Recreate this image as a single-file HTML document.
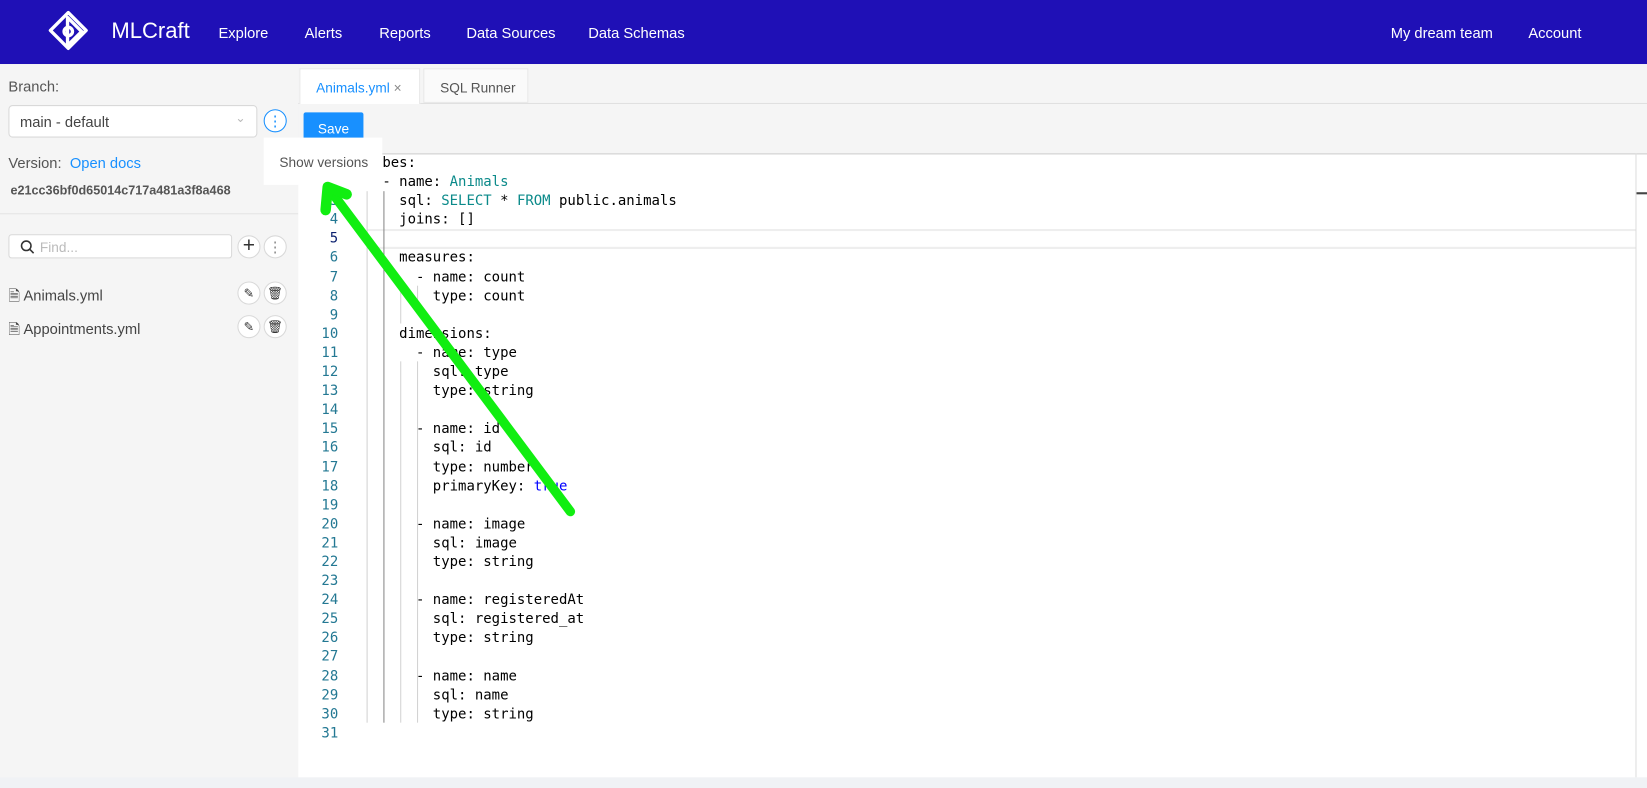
<!DOCTYPE html>
<html><head><meta charset="utf-8"><style>
*{box-sizing:border-box;margin:0;padding:0}
body{width:1647px;height:788px;overflow:hidden;background:#f0f2f5;font-family:"Liberation Sans",sans-serif;position:relative}
#w{position:absolute;left:0;top:0;width:1568px;height:750px;transform:scale(1.0504);transform-origin:0 0;background:#f0f2f5}
.nav{position:absolute;left:0;top:0;width:1568px;height:61px;background:#1f10b6;color:#fff;font-size:14px}
.nav span{position:absolute;top:23px}
.side{position:absolute;left:0;top:61px;width:284px;height:679px;background:#f5f5f5;color:#555;font-size:14px}
.a{position:absolute}
.main{position:absolute;left:284px;top:61px;width:1284px;height:679px;background:#f5f5f5}
.ed{position:absolute;left:284px;top:146px;width:1284px;height:594px;background:#fff;border-top:1px solid #ccc}
.ln{position:absolute;left:284px;width:38px;text-align:right;color:#237893;font:13.3px "DejaVu Sans Mono",monospace;line-height:18.1px}
.code{position:absolute;left:348px;top:147px;font:13.3px "DejaVu Sans Mono",monospace;line-height:18.1px;color:#000;white-space:pre}
.t{color:#0b8a8a}.b{color:#0000ff}
.g{position:absolute;width:1px;background:#d3d3d3}
.circ{position:absolute;width:22px;height:22px;border:1px solid #d9d9d9;border-radius:50%;background:#fff;text-align:center;font-size:14px;line-height:20px;color:#333}
</style></head><body><div id="w">
<div class="nav">
<svg class="a" style="left:44px;top:9px" width="42" height="44" viewBox="0 0 42 44" fill="none" stroke="#fff" stroke-width="3.2" stroke-linejoin="round"><path d="M21 3 L38 20 L21 37 L4 20 Z"/><path d="M11 12 L30 12 L30 31 Z" transform="rotate(45 21 21)"/><circle cx="21" cy="21" r="4"/></svg>
<span style="left:106px;top:18px;font-size:21px">MLCraft</span>
<span style="left:208px">Explore</span><span style="left:290px">Alerts</span><span style="left:361px">Reports</span><span style="left:444px">Data Sources</span><span style="left:560px">Data Schemas</span><span style="left:1324px">My dream team</span><span style="left:1455px">Account</span>
</div>
<div class="side">
<div class="a" style="left:8px;top:13px">Branch:</div>
<div class="a" style="left:8px;top:39px;width:237px;height:31px;background:#fff;border:1px solid #d9d9d9;border-radius:4px;padding:7px 10px;color:#444">main - default<span style="position:absolute;right:10px;top:4px;color:#bbb;font-size:12px">&#8964;</span></div>
<div class="circ" style="left:251px;top:43px;border-color:#1890ff;color:#1890ff">&#8942;</div>
<div class="a" style="left:8px;top:86px">Version: <span style="color:#1890ff;margin-left:4px">Open docs</span></div>
<div class="a" style="left:10px;top:113px;font-size:12px;font-weight:bold;color:#555">e21cc36bf0d65014c717a481a3f8a468</div>
<div class="a" style="left:0;top:142px;width:284px;height:1px;background:#e4e4e4"></div>
<div class="a" style="left:8px;top:162px;width:213px;height:23px;background:#fff;border:1px solid #d9d9d9;border-radius:3px;padding:4px 0 0 29px;color:#bbb;font-size:13px">Find...<svg style="position:absolute;left:10px;top:4px" width="14" height="14" viewBox="0 0 14 14" fill="none" stroke="#333" stroke-width="1.5"><circle cx="6" cy="6" r="4.5"/><path d="M9.5 9.5L13 13"/></svg></div>
<div class="circ" style="left:226px;top:163px;font-size:20px;line-height:19px">+</div>
<div class="circ" style="left:251px;top:163px;color:#888">&#8942;</div>
<div class="a" style="left:8px;top:210px;color:#444">&#128462; Animals.yml</div>
<div class="circ" style="left:226px;top:207px;font-size:12px">&#9998;</div><div class="circ" style="left:251px;top:207px;font-size:12px">&#128465;</div>
<div class="a" style="left:8px;top:242px;color:#444">&#128462; Appointments.yml</div>
<div class="circ" style="left:226px;top:239px;font-size:12px">&#9998;</div><div class="circ" style="left:251px;top:239px;font-size:12px">&#128465;</div>
</div>
<div class="main">
<div class="a" style="left:0;top:37px;width:1284px;height:1px;background:#e0e0e0"></div>
<div class="a" style="left:1px;top:4px;width:115px;height:34px;background:#fff;border:1px solid #e8e8e8;border-bottom:none;color:#1890ff;font-size:13px;padding:10px 0 0 15px">Animals.yml <span style="color:#888">&#215;</span></div>
<div class="a" style="left:119px;top:4px;width:100px;height:33px;background:#fafafa;border:1px solid #e8e8e8;color:#555;font-size:13px;padding:10px 0 0 15px">SQL Runner</div>
<div class="a" style="left:5px;top:46px;width:57px;height:26px;background:#1890ff;color:#fff;font-size:13px;text-align:center;line-height:32px;border-radius:2px">Save</div>
</div>
<div class="ed"></div>
<div class="a" style="left:349px;top:218px;width:1208px;height:19px;border-top:2px solid #eee;border-bottom:2px solid #eee"></div>
<div class="a" style="left:1557px;top:146px;width:1px;height:594px;background:#ddd"></div>
<div class="a" style="left:1558px;top:183px;width:10px;height:2px;background:#444"></div>
<div class="g" style="left:349px;top:182px;height:506px"></div>
<div class="g" style="left:365px;top:182px;height:506px;background:#888"></div>
<div class="g" style="left:381px;top:272px;height:36px"></div>
<div class="g" style="left:397px;top:272px;height:18px"></div>
<div class="g" style="left:381px;top:344px;height:344px"></div>
<div class="g" style="left:397px;top:344px;height:344px"></div>
<div class="ln" style="top:147px">1<br>2<br>3<br>4<br><span style="color:#0b216f">5</span><br>6<br>7<br>8<br>9<br>10<br>11<br>12<br>13<br>14<br>15<br>16<br>17<br>18<br>19<br>20<br>21<br>22<br>23<br>24<br>25<br>26<br>27<br>28<br>29<br>30<br>31</div>
<div class="code">cubes:
  - name: <span class="t">Animals</span>
    sql: <span class="t">SELECT</span> * <span class="t">FROM</span> public.animals
    joins: []

    measures:
      - name: count
        type: count

    dimensions:
      - name: type
        sql: type
        type: string

      - name: id
        sql: id
        type: number
        primaryKey: <span class="b">true</span>

      - name: image
        sql: image
        type: string

      - name: registeredAt
        sql: registered_at
        type: string

      - name: name
        sql: name
        type: string
</div>
<div class="a" style="left:251px;top:131px;width:113px;height:45px;background:#fff;color:#555;font-size:13px;padding:16px 0 0 15px">Show versions</div>
<svg class="a" style="left:0;top:0" width="1568" height="750"><g stroke="#11ee11" stroke-width="9" stroke-linecap="round" fill="none"><path d="M543 487 L312 178"/><path d="M312 178 L310 200 M312 178 L330 185" stroke-width="10"/></g></svg>
</div></body></html>
